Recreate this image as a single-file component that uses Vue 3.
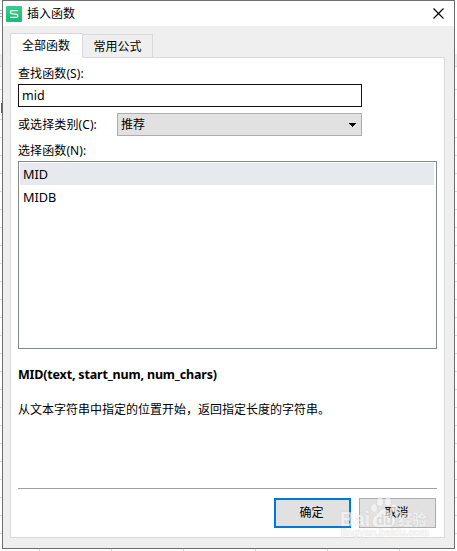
<template>
  <div class="sheet">
    <div class="dialog">
      <header class="titlebar">
        <svg class="logo" width="16" height="16" viewBox="0 0 16 16">
          <defs>
            <linearGradient id="green" x1="0" y1="0" x2="0" y2="1">
              <stop offset="0" stop-color="#36cf8b" />
              <stop offset="1" stop-color="#24b678" />
            </linearGradient>
          </defs>
          <rect width="16" height="16" rx="1" fill="url(#green)" />
          <path
            d="M12 4.6H5.6Q4.5 4.6 4.5 5.7V6.5Q4.5 7.4 5.6 7.6L10.6 8.4Q11.7 8.6 11.7 9.5V10.3Q11.7 11.4 10.6 11.4H4"
            fill="none"
            stroke="#e9fff4"
            stroke-width="1.4"
          />
        </svg>
        <span class="title">插入函数</span>
        <svg class="close" width="11" height="11" viewBox="0 0 11 11">
          <path d="M.5 .5L10.5 10.5M10.5 .5L.5 10.5" stroke="#000" stroke-width="1.15" />
        </svg>
      </header>

      <nav class="tabs">
        <button
          v-for="tab in tabs"
          :key="tab"
          class="tab"
          :class="{ active: tab === activeTab }"
          @click="activeTab = tab"
        >
          {{ tab }}
        </button>
      </nav>

      <main class="panel">
        <label class="label" for="search">查找函数(S):</label>
        <input id="search" v-model="search" class="search" type="text" spellcheck="false" />
        <div class="category">
          <span class="label">或选择类别(C):</span>
          <div class="select">
            <span>推荐</span>
            <svg width="7" height="4" viewBox="0 0 7 4" shape-rendering="crispEdges">
              <path d="M0 0H7V1H6V2H5V3H4V4H3V3H2V2H1V1H0Z" fill="#000" />
            </svg>
          </div>
        </div>
        <span class="label list-label">选择函数(N):</span>
        <ul class="list">
          <li
            v-for="fn in functions"
            :key="fn"
            :class="{ selected: fn === selected }"
            @click="selected = fn"
          >
            {{ fn }}
          </li>
        </ul>
        <p class="syntax">MID(text, start_num, num_chars)</p>
        <p class="description">从文本字符串中指定的位置开始，返回指定长度的字符串。</p>
        <footer class="footer">
          <button class="btn primary">确定</button>
          <button class="btn">取消</button>
        </footer>
      </main>
    </div>

    <svg class="watermark" width="92" height="44" viewBox="0 0 92 44">
      <g class="mark">
        <ellipse cx="34" cy="11" rx="3" ry="4" />
        <ellipse cx="40" cy="5" rx="3.1" ry="4.3" />
        <ellipse cx="48" cy="5" rx="3.1" ry="4.3" />
        <ellipse cx="54" cy="11" rx="3" ry="4" />
        <path d="M44 12C48 12 49 16 53 19C57 23 55 30 49 30H38C32 30 31 23 35 19C39 16 40 12 44 12Z" />
        <text x="0" y="28.5" font-size="21" textLength="30" lengthAdjust="spacingAndGlyphs">Bai</text>
        <text x="58" y="28" font-size="15" textLength="29">经验</text>
        <text x="1" y="39" font-size="10" textLength="88" lengthAdjust="spacingAndGlyphs">jingyan.baidu.com</text>
      </g>
      <text class="du" x="36" y="28" font-size="14" textLength="17" lengthAdjust="spacingAndGlyphs">du</text>
    </svg>
  </div>
</template>

<script setup>
import { ref } from "vue";

const tabs = ["全部函数", "常用公式"];
const activeTab = ref("全部函数");
const search = ref("mid");
const functions = ["MID", "MIDB"];
const selected = ref("MID");
</script>

<style>
body {
  margin: 0;
  overflow: hidden;
}
</style>

<style scoped>
.sheet {
  position: relative;
  width: 457px;
  height: 551px;
  padding: 0 2px;
  box-sizing: border-box;
  overflow: hidden;
  /* spreadsheet lines that show around the dialog */
  background:
    repeating-linear-gradient(to bottom, #d6d6dc 0 1px, transparent 1px 18px) 0 119px / 100% 428px no-repeat,
    linear-gradient(#d6d6d6, #d6d6d6) 0 66px / 100% 1px no-repeat,
    linear-gradient(#d6d6d6, #d6d6d6) 0 89px / 100% 1px no-repeat,
    linear-gradient(#eee, #eee) 0 54px / 100% 12px no-repeat,
    repeating-linear-gradient(to bottom, #aaa 0 1px, transparent 1px 3px) 0 10px / 2px 7px no-repeat,
    linear-gradient(#555f70, #555f70) 1px 103px / 1px 10px no-repeat,
    repeating-linear-gradient(to right, #d6d6dc 0 1px, transparent 1px 72px) 39px 549px / 100% 2px no-repeat,
    #fff;
  font: 12px/16px "Noto Sans", "Noto Sans CJK SC", sans-serif;
  color: #000;
}
.dialog {
  display: flex;
  flex-direction: column;
  width: 453px;
  height: 549px;
  box-sizing: border-box;
  border: 1px solid #6e6e6e;
  background: #efefef;
}
.titlebar {
  display: flex;
  align-items: center;
  flex: none;
  height: 25px;
  padding: 0 10px 0 3px;
  background: #fff;
}
.title {
  flex: 1;
  margin-left: 5px;
}
.tabs {
  display: flex;
  align-items: flex-end;
  height: 25px;
  margin: 7px 0 -1px 7px;
}
.tab {
  width: 70px;
  height: 24px;
  padding: 2px 0 0;
  border: 1px solid #d9d9d9;
  border-left: 0;
  background: #efefef;
  font: inherit;
  color: #000;
}
.tab.active {
  width: 73px;
  height: 25px;
  padding: 0 1px 0 0;
  border-left: 1px solid #d9d9d9;
  border-bottom-color: #fff;
  background: #fff;
  z-index: 1;
}
.panel {
  display: flex;
  flex-direction: column;
  width: 435px;
  height: 481px;
  margin-left: 7px;
  padding: 8px 7px 9px;
  box-sizing: border-box;
  border: 1px solid #d9d9d9;
  background: #fff;
}
.label {
  letter-spacing: 0.1px;
  white-space: nowrap;
}
.search {
  width: 344px;
  height: 23px;
  margin-top: 2px;
  padding: 0 3px 1px;
  box-sizing: border-box;
  border: 1px solid #111;
  outline: 0;
  font: inherit;
  font-size: 12.5px;
}
.category {
  display: flex;
  align-items: center;
  justify-content: space-between;
  width: 344px;
  margin-top: 6px;
}
.select {
  display: flex;
  align-items: center;
  justify-content: space-between;
  width: 245px;
  height: 23px;
  padding: 0 5px 0 3px;
  box-sizing: border-box;
  border: 1px solid #adadad;
  background: #e1e1e1;
}
.list-label {
  margin-top: 7px;
}
.list {
  height: 188px;
  margin: 2px 0 0;
  padding: 1px 2px 1px 1px;
  box-sizing: border-box;
  border: 1px solid #828790;
  list-style: none;
  font-size: 12.7px;
}
.list li {
  height: 22px;
  margin-bottom: 1px;
  padding-left: 3px;
  line-height: 22px;
}
.list li.selected {
  background: #e6e9ee;
}
.syntax {
  margin: 18px 0 0;
  font-size: 12.5px;
  font-weight: 700;
  letter-spacing: -0.18px;
}
.description {
  margin: 19px 0 0;
}
.footer {
  display: flex;
  justify-content: flex-end;
  gap: 8px;
  margin-top: auto;
  padding: 9px 1px 0 0;
  border-top: 1px solid #a0a0a0;
}
.btn {
  width: 77px;
  height: 30px;
  padding: 0 2px 0 0;
  border: 1px solid #adadad;
  background: #e1e1e1;
  font: inherit;
  color: #000;
}
.btn.primary {
  border: 2px solid #0078d7;
}
.watermark {
  position: absolute;
  left: 340px;
  top: 497px;
  font-family: "Liberation Sans", "Noto Sans CJK SC", sans-serif;
  font-weight: 700;
}
.mark {
  fill: #fafafa;
  fill-opacity: 0.65;
  stroke: #bbb;
  stroke-opacity: 0.4;
  stroke-width: 0.7;
  paint-order: stroke;
}
.du {
  fill: #d2d2d2;
  fill-opacity: 0.75;
}
</style>
